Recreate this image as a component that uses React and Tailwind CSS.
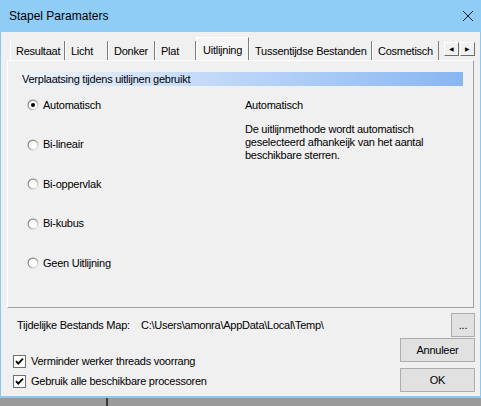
import React from 'react'

const TABS = [
  { label: 'Resultaat', w: 'w-[55px]' },
  { label: 'Licht', w: 'w-[43px]' },
  { label: 'Donker', w: 'w-[47px]' },
  { label: 'Plat', w: 'w-[41px]' },
  { label: 'Uitlijning', w: 'w-[53px]', active: true },
  { label: 'Tussentijdse Bestanden', w: 'w-[123px]' },
  { label: 'Cosmetisch', w: 'w-[67px]' },
]

const OPTIONS = ['Automatisch', 'Bi-lineair', 'Bi-oppervlak', 'Bi-kubus', 'Geen Uitlijning']

function Radio({ checked }) {
  return (
    <svg width="12" height="12" viewBox="0 0 12 12" className="shrink-0">
      <defs>
        <linearGradient id="rg" x1="0" y1="0" x2="1" y2="1">
          <stop offset="0" stopColor="#6d6d6d" />
          <stop offset="0.5" stopColor="#a0a0a0" />
          <stop offset="1" stopColor="#ffffff" />
        </linearGradient>
      </defs>
      <circle cx="6" cy="6" r="5.5" fill="url(#rg)" />
      <circle cx="6" cy="6" r="4.3" fill="#ffffff" />
      {checked && <circle cx="6" cy="6" r="2" fill="#000000" />}
    </svg>
  )
}

function Check() {
  return (
    <svg width="13" height="13" viewBox="0 0 13 13" className="shrink-0">
      <rect x="0.5" y="0.5" width="12" height="12" fill="#ffffff" stroke="#6e6e6e" />
      <path d="M3 6.2 L5.2 8.6 L10 3.6" fill="none" stroke="#000000" strokeWidth="1.8" />
    </svg>
  )
}

function Btn({ children, className = '' }) {
  return (
    <div className={`flex items-center justify-center h-[24px] bg-[#e1e1e1] border border-[#adadad] ${className}`}>
      {children}
    </div>
  )
}

export default function App() {
  return (
    <div className="w-[481px] h-[406px] overflow-hidden bg-[#9a9a9a] font-['Liberation_Sans',Arial,sans-serif] text-[11px] tracking-[-0.25px] text-black leading-none">
      <div className="h-[398px] flex flex-col bg-[#f0f0f0] border-x border-b-2 border-[#8cc8f0]">
        {/* title bar */}
        <div className="h-[32px] shrink-0 bg-[#8fcdf6] flex items-center justify-between pl-[9px] pr-[7px] -mx-px">
          <span className="text-[12px] tracking-normal">Stapel Paramaters</span>
          <svg width="12" height="12" viewBox="0 0 12 12">
            <path d="M1 1 L11 11 M11 1 L1 11" stroke="#1a1a1a" strokeWidth="1" />
          </svg>
        </div>

        {/* tab strip */}
        <div className="h-[28px] shrink-0 flex items-end pl-[9px]">
          {TABS.map(t => (
            <div
              key={t.label}
              className={
                t.active
                  ? `${t.w} h-[23px] pl-[6px] pt-[7px] whitespace-nowrap bg-[#f4f4f4] border-l border-t border-white border-r border-r-[#7a7a7a]`
                  : `${t.w} h-[19px] pl-[5px] pt-[5px] whitespace-nowrap border-l border-white border-r border-r-[#7a7a7a]`
              }
            >
              {t.label}
            </div>
          ))}
          <div className="flex ml-[5px] mb-[4px] gap-px">
            {['◀', '▶'].map(a => (
              <div key={a} className="w-[15px] h-[14px] bg-[#f0f0f0] border border-white border-r-[#6d6d6d] border-b-[#6d6d6d] flex items-center justify-center text-[6px]">
                {a}
              </div>
            ))}
          </div>
        </div>

        {/* tab panel */}
        <div className="mx-[6px] h-[248px] shrink-0 border border-t-white border-l-white border-r-[#a0a0a0] border-b-[#a0a0a0] pl-[12px] pt-[11px]">
          <div className="w-[443px] h-[14px] bg-linear-to-r from-[#eef3fa] to-[#88b6f2] flex items-center pl-[2px]">
            Verplaatsing tijdens uitlijnen gebruikt
          </div>
          <div className="flex mt-[11px]">
            <div className="w-[225px] pl-[7px] flex flex-col gap-[23.5px]">
              {OPTIONS.map((o, i) => (
                <div key={o} className="h-[16px] flex items-center gap-[4px]">
                  <Radio checked={i === 0} />
                  <span>{o}</span>
                </div>
              ))}
            </div>
            <div className="flex flex-col">
              <div className="h-[16px] flex items-center">Automatisch</div>
              <div className="mt-[10px] leading-[13px] w-[190px]">
                De uitlijnmethode wordt automatisch geselecteerd afhankeijk van het aantal beschikbare sterren.
              </div>
            </div>
          </div>
        </div>

        {/* temp folder row */}
        <div className="h-[24px] mt-[5px] flex items-center pl-[16px] pr-[5px]">
          <span className="w-[124px]">Tijdelijke Bestands Map:</span>
          <span className="flex-1">C:\Users\amonra\AppData\Local\Temp\</span>
          <Btn className="w-[24px]">...</Btn>
        </div>

        {/* bottom */}
        <div className="flex justify-between pl-[12px] pr-[5px]">
          <div className="flex flex-col gap-[7px] mt-[18px]">
            <div className="h-[13px] flex items-center gap-[5px]">
              <Check />
              <span>Verminder werker threads voorrang</span>
            </div>
            <div className="h-[13px] flex items-center gap-[5px]">
              <Check />
              <span>Gebruik alle beschikbare processoren</span>
            </div>
          </div>
          <div className="flex flex-col gap-[6px] mt-px">
            <Btn className="w-[75px]">Annuleer</Btn>
            <Btn className="w-[75px] border-[#5a5a5a]">OK</Btn>
          </div>
        </div>
      </div>
      <div className="ml-[106px] w-[2px] h-[8px] bg-[#3a3a3a]" />
    </div>
  )
}
